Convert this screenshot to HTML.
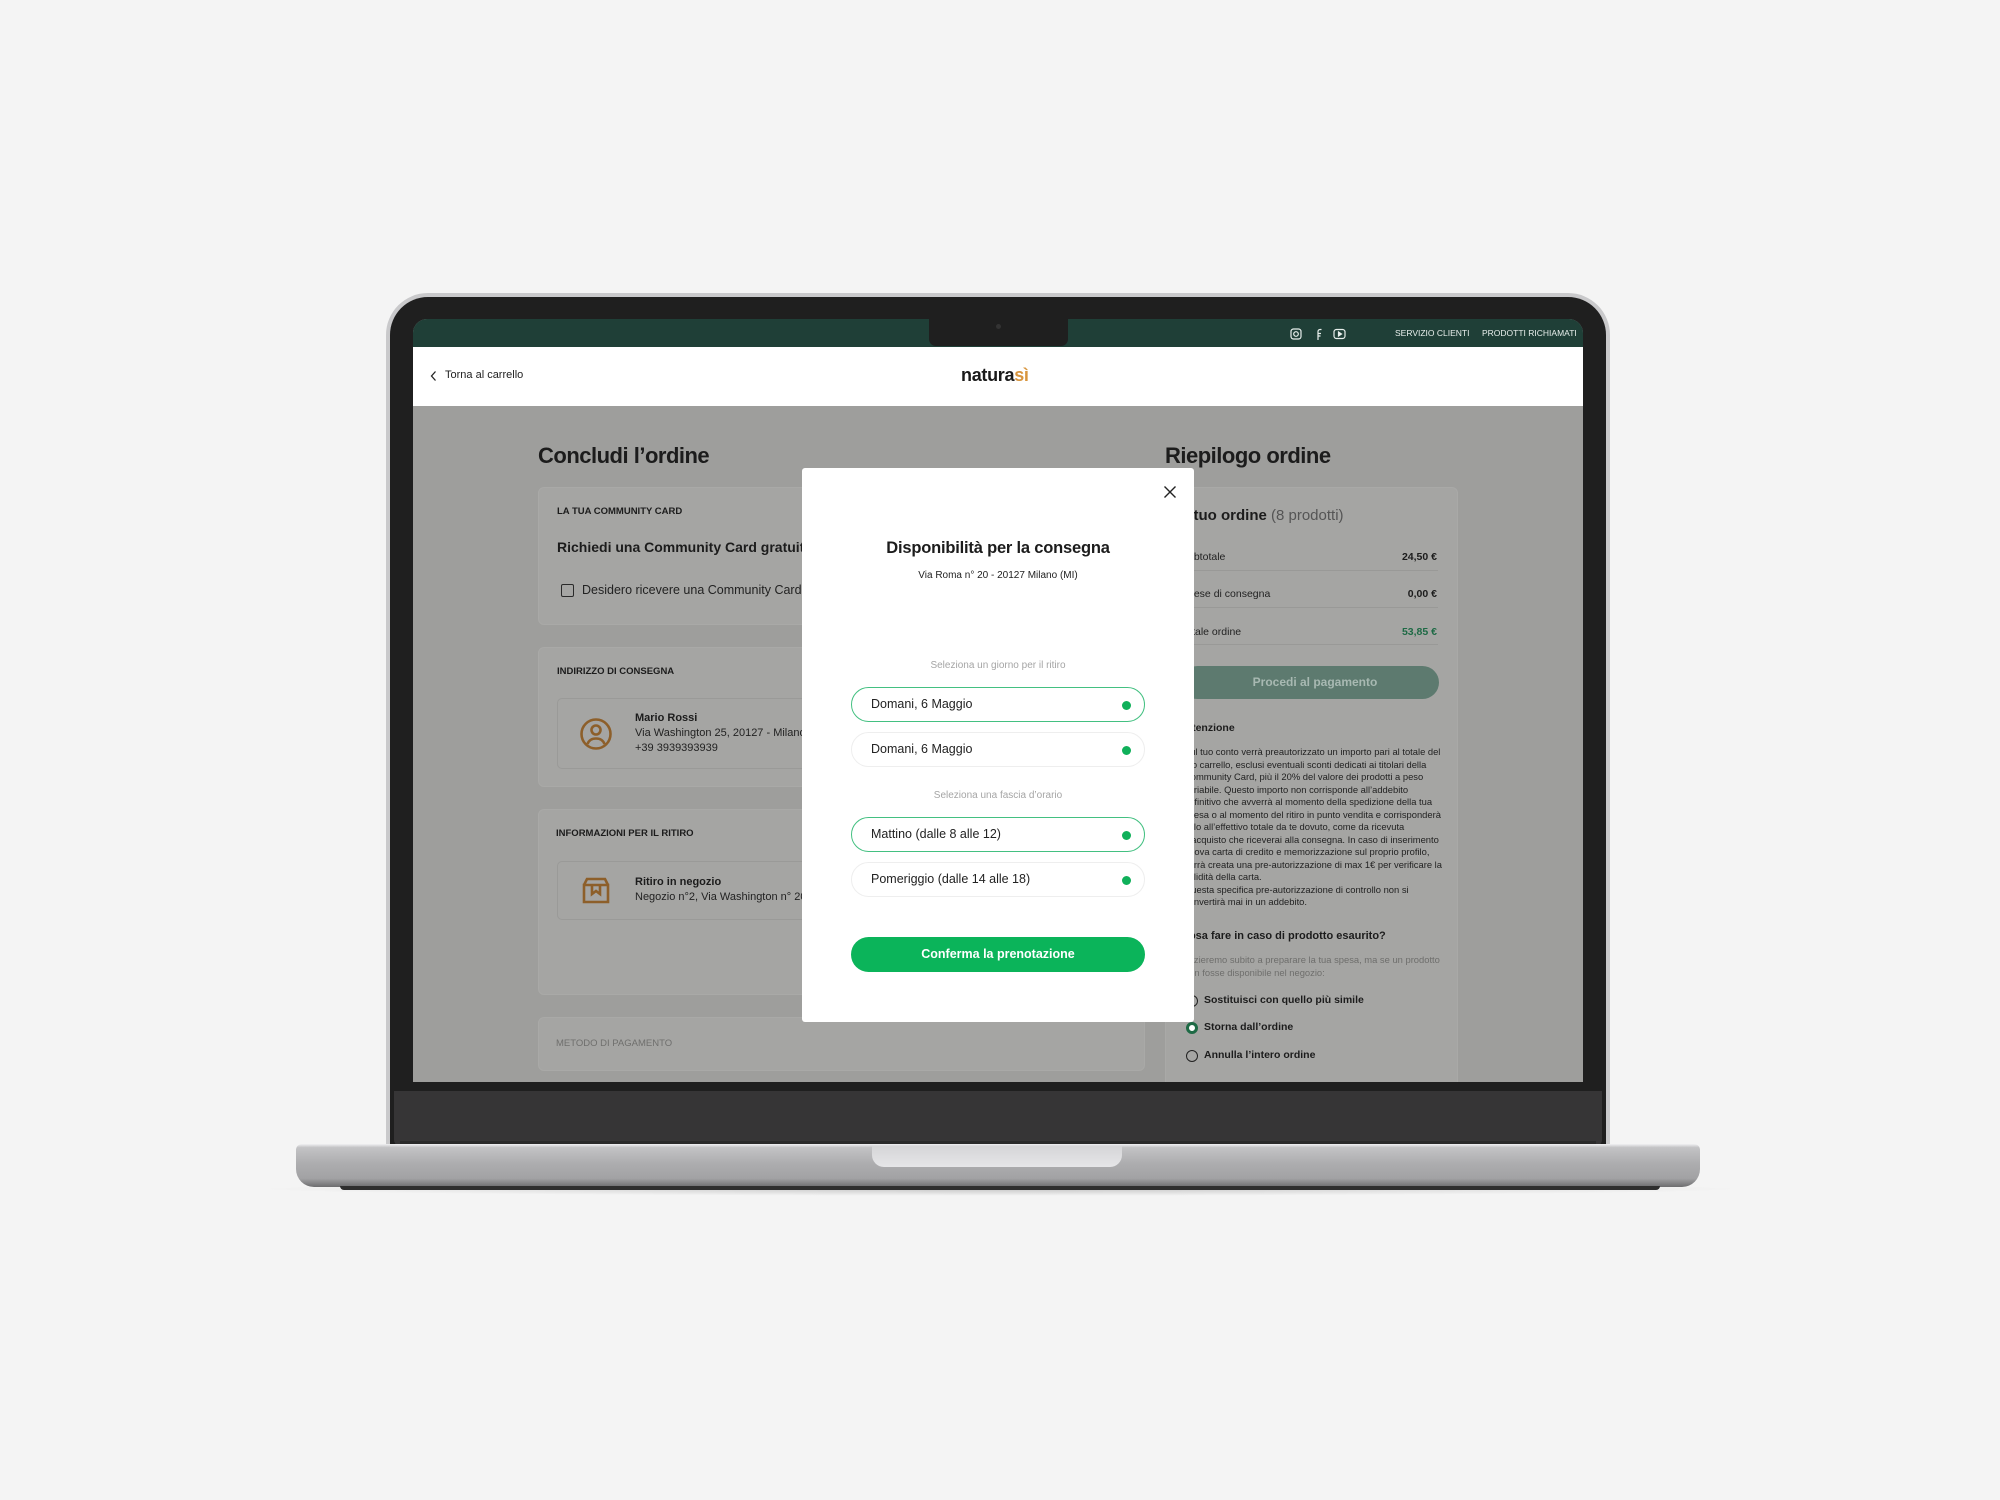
<!DOCTYPE html>
<html><head><meta charset="utf-8"><style>
*{margin:0;padding:0;box-sizing:border-box}
body{width:2000px;height:1500px;background:#f4f4f4;position:relative;overflow:hidden;font-family:"Liberation Sans",sans-serif;color:#222}
.a{position:absolute}
.t{position:absolute;white-space:nowrap}
</style></head><body>
<div class="a" style="left:250px;top:1182px;width:1500px;height:14px;background:radial-gradient(ellipse at center,rgba(0,0,0,.18),rgba(0,0,0,0) 70%)"></div>
<!-- lid -->
<div class="a" style="left:386px;top:293px;width:1224px;height:860px;border-radius:42px 42px 0 0;background:#c9c9cb"></div>
<div class="a" style="left:390px;top:297px;width:1216px;height:856px;border-radius:38px 38px 0 0;background:#1f1f1f"></div>
<div class="a" style="left:394px;top:1091px;width:1208px;height:55px;background:#363536;border-radius:0 0 6px 6px"></div>
<!-- screen -->
<div class="a" style="left:413px;top:319px;width:1170px;height:763px;overflow:hidden;background:#9e9e9c;border-radius:14px 14px 0 0">
  <div class="a" style="left:0;top:0;width:1170px;height:28px;background:#1f3f37"></div>
  <svg class="a" style="left:876px;top:8px" width="72" height="14" viewBox="0 0 72 14" fill="none" stroke="#e8efec" stroke-width="1.2">
    <rect x="2" y="2" width="10" height="10" rx="2.5"/><circle cx="7" cy="7" r="2.3"/>
    <path d="M29 13V6.5h3M29 9h2.5M32.5 2.5h-1.5a2 2 0 0 0-2 2V6"/>
    <rect x="45" y="2.5" width="11" height="9" rx="2.5"/><path d="M49.5 5v4l3-2z" fill="#e8efec"/>
  </svg>
  <div class="t" style="left:982px;top:9px;font-size:8.5px;color:#e8efec">SERVIZIO CLIENTI</div>
  <div class="t" style="left:1069px;top:9px;font-size:8.5px;color:#e8efec">PRODOTTI RICHIAMATI</div>
  <div class="a" style="left:0;top:28px;width:1170px;height:59px;background:#fff"></div>
  <svg class="a" style="left:16px;top:51px" width="10" height="12" viewBox="0 0 10 12"><path d="M6.5 1.5L2.5 6l4 4.5" stroke="#222" stroke-width="1.3" fill="none"/></svg>
  <div class="t" style="left:32px;top:50px;font-size:11px;color:#222">Torna al carrello</div>
  <div class="t" style="left:548px;top:46px;font-size:18px;font-weight:bold;color:#1a1a1a;letter-spacing:-.3px">natura<span style="color:#d8953e">sì</span></div>
  <div class="t" style="left:125px;top:124px;font-size:22px;font-weight:bold;color:#1c1c1c;letter-spacing:-.5px">Concludi l’ordine</div>
  <div class="t" style="left:752px;top:124px;font-size:22px;font-weight:bold;color:#1c1c1c;letter-spacing:-.5px">Riepilogo ordine</div>
  <div class="a" style="left:125px;top:168px;width:607px;height:138px;background:#a5a5a3;border:1px solid #a9a9a7;border-radius:6px"></div>
  <div class="t" style="left:144px;top:187px;font-size:9.5px;font-weight:bold;color:#1c1c1c">LA TUA COMMUNITY CARD</div>
  <div class="t" style="left:144px;top:220px;font-size:14px;font-weight:bold;color:#1c1c1c">Richiedi una Community Card gratuita</div>
  <div class="a" style="left:148px;top:265px;width:13px;height:13px;border:1.5px solid #2a2a2a;border-radius:2px"></div>
  <div class="t" style="left:169px;top:264px;font-size:12.5px;color:#222">Desidero ricevere una Community Card</div>
  <div class="a" style="left:125px;top:328px;width:607px;height:140px;background:#a5a5a3;border:1px solid #a9a9a7;border-radius:6px"></div>
  <div class="t" style="left:144px;top:347px;font-size:9.5px;font-weight:bold;color:#1c1c1c">INDIRIZZO DI CONSEGNA</div>
  <div class="a" style="left:144px;top:379px;width:570px;height:71px;border:1px solid #9a9a98;border-radius:5px"></div>
  <svg class="a" style="left:166px;top:398px" width="34" height="34" viewBox="0 0 34 34" fill="none" stroke="#8d5f2a" stroke-width="2.6"><circle cx="17" cy="17" r="14.5"/><circle cx="17" cy="13" r="4.5"/><path d="M8.5 27c1.5-4 5-5.5 8.5-5.5s7 1.5 8.5 5.5"/></svg>
  <div class="t" style="left:222px;top:393px;font-size:11px;font-weight:bold;color:#1c1c1c">Mario Rossi</div>
  <div class="t" style="left:222px;top:408px;font-size:11px;color:#222">Via Washington 25, 20127 - Milano</div>
  <div class="t" style="left:222px;top:423px;font-size:11px;color:#222">+39 3939393939</div>
  <div class="a" style="left:125px;top:490px;width:607px;height:186px;background:#a5a5a3;border:1px solid #a9a9a7;border-radius:6px"></div>
  <div class="t" style="left:143px;top:509px;font-size:9.5px;font-weight:bold;color:#1c1c1c">INFORMAZIONI PER IL RITIRO</div>
  <div class="a" style="left:144px;top:542px;width:570px;height:59px;border:1px solid #9a9a98;border-radius:5px"></div>
  <svg class="a" style="left:168px;top:557px" width="30" height="28" viewBox="0 0 30 28" fill="none" stroke="#8d5f2a" stroke-width="2.6"><path d="M3 9h24v17H3zM3 9l3-6h18l3 6M11 9v9l4-3 4 3V9"/></svg>
  <div class="t" style="left:222px;top:557px;font-size:11px;font-weight:bold;color:#1c1c1c">Ritiro in negozio</div>
  <div class="t" style="left:222px;top:572px;font-size:11px;color:#222">Negozio n°2, Via Washington n° 20</div>
  <div class="a" style="left:125px;top:698px;width:607px;height:54px;background:#a5a5a3;border:1px solid #a9a9a7;border-radius:6px"></div>
  <div class="t" style="left:143px;top:719px;font-size:9.5px;color:#6f6f6d">METODO DI PAGAMENTO</div>
  <div class="a" style="left:752px;top:168px;width:293px;height:620px;background:#a5a5a3;border:1px solid #a9a9a7;border-radius:6px"></div>
  <div class="t" style="left:768px;top:188px;font-size:15px;font-weight:bold;color:#1c1c1c">Il tuo ordine <span style="color:#555;font-weight:normal">(8 prodotti)</span></div>
  <div class="t" style="left:768px;top:232px;font-size:10.5px;color:#222">Subtotale</div>
  <div class="t" style="left:960px;top:232px;width:64px;text-align:right;font-size:10.5px;font-weight:bold;color:#1c1c1c">24,50 €</div>
  <div class="a" style="left:768px;top:251px;width:257px;height:1px;background:#999997"></div>
  <div class="t" style="left:768px;top:269px;font-size:10.5px;color:#222">Spese di consegna</div>
  <div class="t" style="left:960px;top:269px;width:64px;text-align:right;font-size:10.5px;font-weight:bold;color:#1c1c1c">0,00 €</div>
  <div class="a" style="left:768px;top:288px;width:257px;height:1px;background:#999997"></div>
  <div class="t" style="left:768px;top:307px;font-size:10.5px;color:#222">Totale ordine</div>
  <div class="t" style="left:960px;top:307px;width:64px;text-align:right;font-size:10.5px;font-weight:bold;color:#1e6a45">53,85 €</div>
  <div class="a" style="left:768px;top:325px;width:257px;height:1px;background:#999997"></div>
  <div class="a" style="left:768px;top:347px;width:258px;height:33px;border-radius:17px;background:#5d7a6f;color:#a8b9b2;font-size:12px;font-weight:bold;text-align:center;line-height:33px;padding-left:10px">Procedi al pagamento</div>
  <div class="t" style="left:768px;top:403px;font-size:10.5px;font-weight:bold;color:#1c1c1c">Attenzione</div>
  <div class="t" style="left:771px;top:427px;font-size:9.4px;line-height:12.5px;color:#222;white-space:pre">Sul tuo conto verrà preautorizzato un importo pari al totale del
tuo carrello, esclusi eventuali sconti dedicati ai titolari della
Community Card, più il 20% del valore dei prodotti a peso
variabile. Questo importo non corrisponde all’addebito
definitivo che avverrà al momento della spedizione della tua
spesa o al momento del ritiro in punto vendita e corrisponderà
solo all’effettivo totale da te dovuto, come da ricevuta
d’acquisto che riceverai alla consegna. In caso di inserimento
nuova carta di credito e memorizzazione sul proprio profilo,
verrà creata una pre-autorizzazione di max 1€ per verificare la
validità della carta.
Questa specifica pre-autorizzazione di controllo non si
convertirà mai in un addebito.</div>
  <div class="t" style="left:768px;top:611px;font-size:11px;font-weight:bold;color:#1c1c1c">Cosa fare in caso di prodotto esaurito?</div>
  <div class="t" style="left:771px;top:635px;font-size:9.4px;line-height:12.5px;color:#6e6e6c;white-space:pre">Inizieremo subito a preparare la tua spesa, ma se un prodotto
non fosse disponibile nel negozio:</div>
  <div class="a" style="left:773px;top:676px;width:12px;height:12px;border:1.5px solid #222;border-radius:50%"></div>
  <div class="t" style="left:791px;top:675px;font-size:10.5px;font-weight:bold;color:#1c1c1c">Sostituisci con quello più simile</div>
  <div class="a" style="left:773px;top:703px;width:12px;height:12px;border:3.5px solid #1e6a45;background:#fff;border-radius:50%"></div>
  <div class="t" style="left:791px;top:702px;font-size:10.5px;font-weight:bold;color:#1c1c1c">Storna dall’ordine</div>
  <div class="a" style="left:773px;top:731px;width:12px;height:12px;border:1.5px solid #222;border-radius:50%"></div>
  <div class="t" style="left:791px;top:730px;font-size:10.5px;font-weight:bold;color:#1c1c1c">Annulla l’intero ordine</div>
  <div class="a" style="left:389px;top:149px;width:392px;height:554px;background:#fff;border-radius:3px">
    <svg class="a" style="left:361px;top:17px" width="14" height="14" viewBox="0 0 14 14"><path d="M1.5 1.5l11 11M12.5 1.5l-11 11" stroke="#222" stroke-width="1.4"/></svg>
    <div class="t" style="left:0;width:392px;top:71px;text-align:center;font-size:16.5px;font-weight:bold;color:#1c1c1c;letter-spacing:-.2px">Disponibilità per la consegna</div>
    <div class="t" style="left:0;width:392px;top:102px;text-align:center;font-size:10px;color:#222">Via Roma n° 20 - 20127 Milano (MI)</div>
    <div class="t" style="left:0;width:392px;top:192px;text-align:center;font-size:10px;color:#a5a5a5">Seleziona un giorno per il ritiro</div>
    <div class="a" style="left:49px;top:219px;width:294px;height:35px;border:1.6px solid #43c081;border-radius:18px"><span class="t" style="left:19px;top:9px;font-size:12.5px;color:#222">Domani, 6 Maggio</span><span class="a" style="left:270px;top:13px;width:9px;height:9px;border-radius:50%;background:#10b05a"></span></div>
    <div class="a" style="left:49px;top:264px;width:294px;height:35px;border:1.3px solid #eeeeee;border-radius:18px"><span class="t" style="left:19px;top:9px;font-size:12.5px;color:#222">Domani, 6 Maggio</span><span class="a" style="left:270px;top:13px;width:9px;height:9px;border-radius:50%;background:#10b05a"></span></div>
    <div class="t" style="left:0;width:392px;top:322px;text-align:center;font-size:10px;color:#a5a5a5">Seleziona una fascia d’orario</div>
    <div class="a" style="left:49px;top:349px;width:294px;height:35px;border:1.6px solid #43c081;border-radius:18px"><span class="t" style="left:19px;top:9px;font-size:12.5px;color:#222">Mattino (dalle 8 alle 12)</span><span class="a" style="left:270px;top:13px;width:9px;height:9px;border-radius:50%;background:#10b05a"></span></div>
    <div class="a" style="left:49px;top:394px;width:294px;height:35px;border:1.3px solid #eeeeee;border-radius:18px"><span class="t" style="left:19px;top:9px;font-size:12.5px;color:#222">Pomeriggio (dalle 14 alle 18)</span><span class="a" style="left:270px;top:13px;width:9px;height:9px;border-radius:50%;background:#10b05a"></span></div>
    <div class="a" style="left:49px;top:469px;width:294px;height:35px;border-radius:18px;background:#0bb45a;color:#fff;font-size:12.5px;font-weight:bold;text-align:center;line-height:35px">Conferma la prenotazione</div>
  </div>
</div>
<div class="a" style="left:929px;top:316px;width:139px;height:30px;background:#1f1f1f;border-radius:0 0 7px 7px"></div>
<div class="a" style="left:996px;top:324px;width:5px;height:5px;border-radius:50%;background:#333"></div>
<!-- base -->
<div class="a" style="left:400px;top:1141px;width:1196px;height:4px;background:#2a2a2a"></div>
<div class="a" style="left:296px;top:1144px;width:1404px;height:43px;border-radius:6px 6px 18px 18px;background:linear-gradient(#f1f1f3 0,#c3c3c5 8%,#adadaf 45%,#a2a2a4 80%,#6d6d6f 100%)"></div>
<div class="a" style="left:872px;top:1146px;width:250px;height:21px;border-radius:0 0 12px 12px;background:linear-gradient(#d5d5d7,#e6e6e8)"></div>
<div class="a" style="left:340px;top:1186px;width:1320px;height:4px;background:#2e2e2e;border-radius:0 0 4px 4px"></div>
</body></html>
